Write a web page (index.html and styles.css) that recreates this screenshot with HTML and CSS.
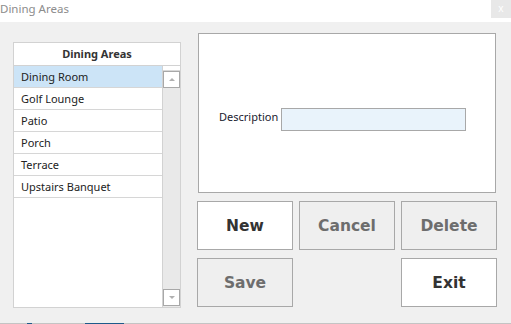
FILE: index.html
```html
<!DOCTYPE html>
<html lang="en">

<head>
    <meta charset="UTF-8">
    <meta name="viewport" content="width=device-width, initial-scale=1.0">
    <title>Dining Areas</title>
    <link rel="stylesheet" href="styles.css">
</head>

<body>
    <div id="titleBar">
        <span class="title">Dining Areas</span>
        <span class="closeBox">x</span>
    </div>

    <div id="main">
        <div id="listBox">
            <div class="listHead">Dining Areas</div>
            <div class="listBody">
                <div class="items">
                    <div class="item selected">Dining Room</div>
                    <div class="item">Golf Lounge</div>
                    <div class="item">Patio</div>
                    <div class="item">Porch</div>
                    <div class="item">Terrace</div>
                    <div class="item">Upstairs Banquet</div>
                </div>
                <div class="scroll">
                    <div class="scrollTop"></div>
                    <div class="arrow up"><span></span></div>
                    <div class="track"></div>
                    <div class="arrow down"><span></span></div>
                </div>
            </div>
        </div>

        <div id="rightCol">
            <div id="detailBox">
                <div class="field">
                    <label>Description</label>
                    <input type="text">
                </div>
            </div>
            <div id="btnGrid">
                <button type="button" class="btn active">New</button>
                <button type="button" class="btn">Cancel</button>
                <button type="button" class="btn">Delete</button>
                <button type="button" class="btn">Save</button>
                <div></div>
                <button type="button" class="btn active">Exit</button>
            </div>
        </div>
    </div>

    <div id="bottomLine">
        <span class="seg" style="width: 27px;"></span>
        <span class="seg blue" style="width: 5px;"></span>
        <span class="seg" style="width: 53px;"></span>
        <span class="seg blue" style="width: 39px;"></span>
        <span class="seg grow"></span>
    </div>
</body>

</html>
```

FILE: styles.css
```css
* {
    box-sizing: border-box;
}

body {
    margin: 0;
    width: 511px;
    height: 324px;
    background-color: #f0f0f0;
    font-family: "Noto Sans", "Open Sans", sans-serif;
    font-size: 11px;
    display: flex;
    flex-direction: column;
    overflow: hidden;
}

#titleBar {
    height: 22px;
    background-color: #fff;
    display: flex;
    align-items: flex-start;
    justify-content: space-between;
}

.title {
    color: #8c8c8c;
    font-size: 11.5px;
    line-height: 18px;
}

.closeBox {
    width: 20px;
    height: 18px;
    background-color: #e8e8e8;
    color: #fff;
    font-size: 10px;
    line-height: 17px;
    text-align: center;
}

#main {
    display: flex;
    align-items: flex-start;
    padding-left: 13px;
}

#listBox {
    width: 168px;
    height: 266px;
    margin-top: 20px;
    border: 1px solid #d2d2d2;
    background-color: #fff;
    display: flex;
    flex-direction: column;
}

.listHead {
    height: 23px;
    border-bottom: 1px solid #d2d2d2;
    text-align: center;
    font-weight: bold;
    color: #333;
    line-height: 22px;
}

.listBody {
    flex: 1;
    display: flex;
}

.items {
    width: 150px;
    border-right: 1px solid #d2d2d2;
}

.item {
    height: 22px;
    border-bottom: 1px solid #d6d6d6;
    padding-left: 7px;
    line-height: 21px;
    color: #222;
}

.item.selected {
    background-color: #cce4f7;
}

.scroll {
    width: 17px;
    display: flex;
    flex-direction: column;
    background-color: #e9e9e9;
}

.scrollTop {
    height: 5px;
    background-color: #fff;
    border-bottom: 1px solid #d8d8d8;
}

.track {
    flex: 1;
}

.arrow {
    height: 17px;
    border: 1px solid #a8a8a8;
    background-color: #fff;
    display: flex;
    align-items: center;
    justify-content: center;
}

.arrow span {
    width: 0;
    height: 0;
    border-left: 3px solid transparent;
    border-right: 3px solid transparent;
}

.arrow.up span {
    border-bottom: 3px solid #b0b0b0;
}

.arrow.down span {
    border-top: 3px solid #b0b0b0;
}

.arrow.down {
    margin-bottom: 1px;
}

#rightCol {
    margin-left: 16px;
    margin-top: 11px;
    display: flex;
    flex-direction: column;
}

#detailBox {
    width: 298px;
    height: 160px;
    margin-left: 1px;
    border: 1px solid #a8a8a8;
    background-color: #fff;
    padding-top: 74px;
    padding-left: 20px;
}

.field {
    display: flex;
    align-items: flex-start;
}

.field label {
    color: #1a1a2e;
    width: 62px;
    line-height: 17px;
    white-space: nowrap;
}

.field input {
    width: 185px;
    height: 23px;
    border: 1px solid #a8a8a8;
    background-color: #e9f3fb;
    outline: none;
}

#btnGrid {
    margin-top: 8px;
    display: grid;
    grid-template-columns: 96px 96px 96px;
    grid-auto-rows: 49px;
    column-gap: 6px;
    row-gap: 8px;
}

.btn {
    border: 1px solid #a8a8a8;
    background-color: #efefef;
    color: #6d6d6d;
    font-family: "DejaVu Sans", sans-serif;
    font-weight: bold;
    font-size: 15.5px;
    padding: 0;
}

.btn.active {
    background-color: #fff;
    color: #333;
}

#bottomLine {
    margin-top: auto;
    height: 1px;
    display: flex;
}

.seg {
    height: 1px;
    background-color: #c4c4c4;
}

.seg.blue {
    background-color: #1e5a8a;
}

.seg.grow {
    flex: 1;
}
```
